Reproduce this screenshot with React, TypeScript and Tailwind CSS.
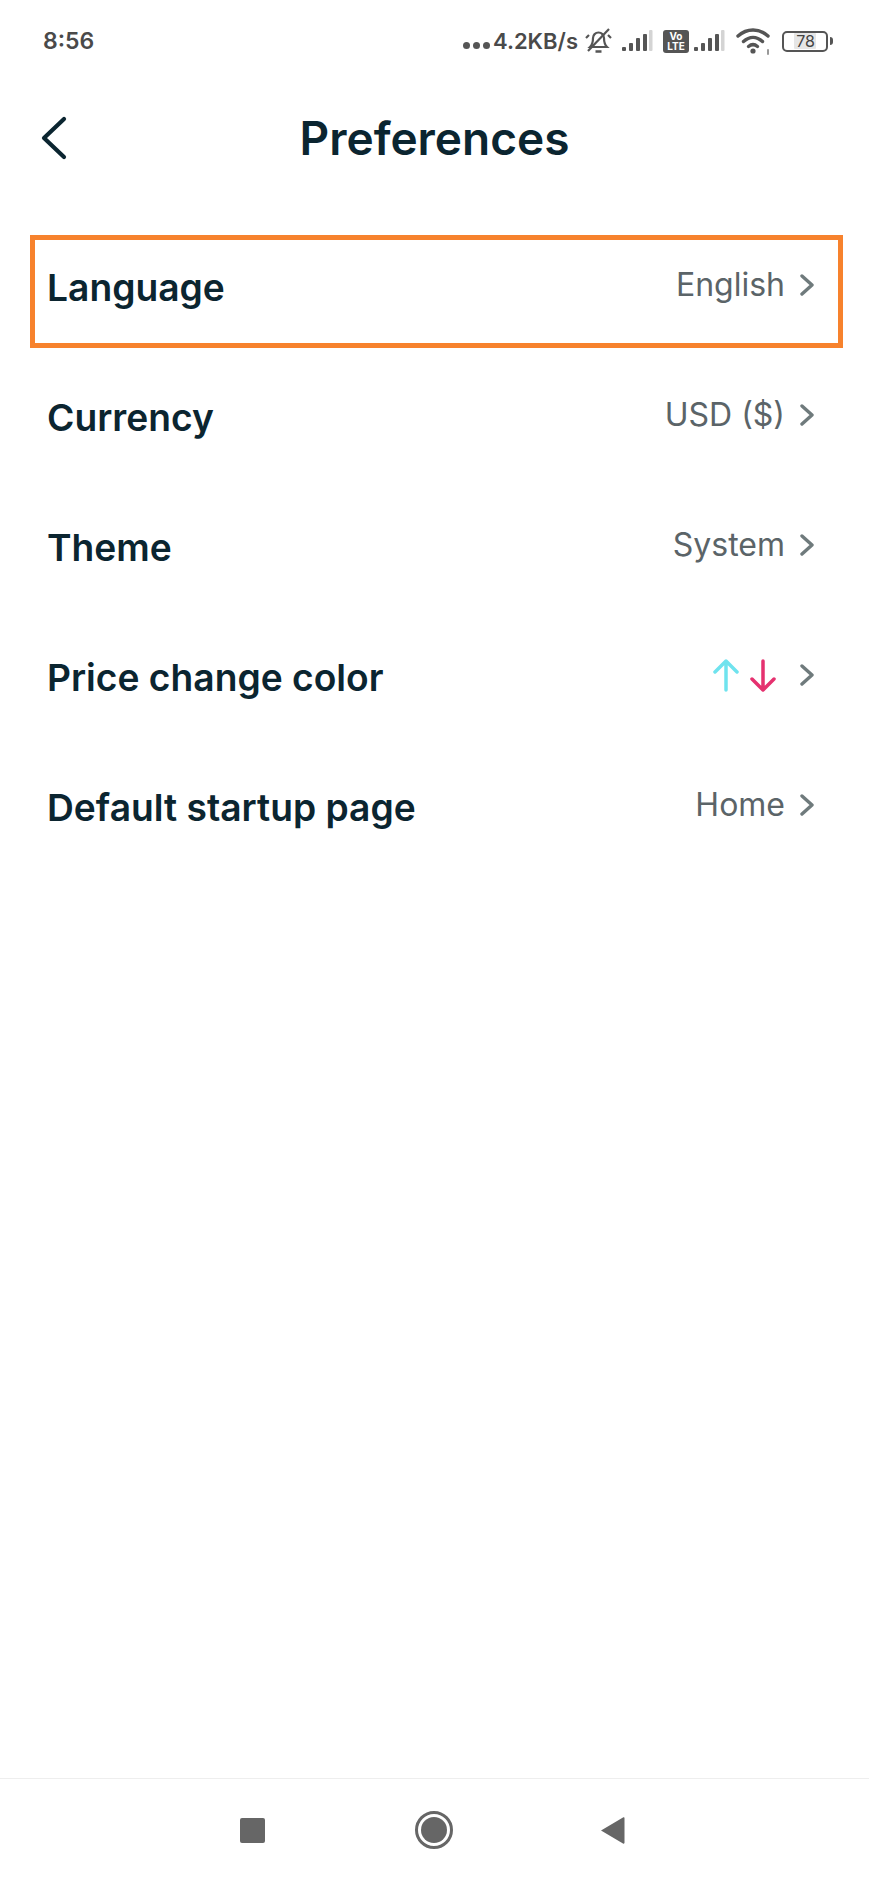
const rows = [
  { label: "Language", value: "English" },
  { label: "Currency", value: "USD ($)" },
  { label: "Theme", value: "System" },
  { label: "Price change color", value: null },
  { label: "Default startup page", value: "Home" },
];

function Signal() {
  return (
    <svg width="32" height="24" viewBox="0 0 32 24">
      <rect x="1" y="18" width="4" height="4" rx="1" fill="#555" />
      <rect x="8" y="14" width="4" height="8" rx="1" fill="#555" />
      <rect x="15" y="9" width="4" height="13" rx="1" fill="#555" />
      <rect x="22" y="5" width="4" height="17" rx="1" fill="#555" />
      <rect x="28" y="1" width="3.5" height="21" rx="1" fill="#d4d4d4" />
    </svg>
  );
}

function MutedBell() {
  return (
    <svg width="27" height="28" viewBox="0 0 27 28" fill="none" stroke="#555" strokeWidth="2.200">
      <path d="M5 20c2-2 3-4 3-9a5.500 5.500 0 0 1 11 0c0 5 1 7 3 9z" />
      <path d="M10.500 24.500h6" strokeWidth="2.500" />
      <path d="M3 24 24 2" />
      <path d="M1 11l3-3M26 11l-3-3" />
    </svg>
  );
}

function Wifi() {
  return (
    <svg width="36" height="28" viewBox="0 0 36 28" fill="none" stroke="#555" strokeWidth="3.400" strokeLinecap="round">
      <path d="M2 9c9-8 21-8 30 0" />
      <path d="M7.500 14.500c6-5.500 13-5.500 19 0" />
      <path d="M12.500 19.500c3-2.500 6-2.500 9 0" />
      <circle cx="17" cy="24" r="2.600" fill="#555" stroke="none" />
      <path d="M32 23v4" strokeWidth="2" stroke="#999" />
    </svg>
  );
}

function StatusBar() {
  return (
    <div className="flex h-[82px] items-center justify-between pl-[43px] pr-[36px] text-[#4a4a4a]">
      <span className="text-[23px] font-semibold">8:56</span>
      <div className="flex items-center">
        <div className="mr-[3px] mt-[8px] flex gap-[3px]">
          <span className="h-[7px] w-[7px] rounded-full bg-[#555]" />
          <span className="h-[7px] w-[7px] rounded-full bg-[#555]" />
          <span className="h-[7px] w-[7px] rounded-full bg-[#555]" />
        </div>
        <span className="text-[22px] font-semibold">4.2KB/s</span>
        <div className="ml-[7px]">
          <MutedBell />
        </div>
        <div className="ml-[9px]">
          <Signal />
        </div>
        <div className="ml-[10px] flex h-[23px] w-[26px] flex-col items-center justify-center rounded-[3px] bg-[#555] text-[10px] font-bold leading-[10px] text-white">
          <span>Vo</span>
          <span>LTE</span>
        </div>
        <div className="ml-[4px]">
          <Signal />
        </div>
        <div className="ml-[11px]">
          <Wifi />
        </div>
        <div className="ml-[10px] flex h-[21px] w-[46px] items-center justify-center rounded-[5px] border-2 border-[#555] text-[16px] leading-none text-[#444]">
          <span className="rounded-[1px] bg-[#e6e6e6] pl-[2px] pr-[1px]">78</span>
        </div>
        <span className="ml-[2px] h-[8px] w-[3px] rounded-r-sm bg-[#555]" />
      </div>
    </div>
  );
}

function Arrows() {
  return (
    <div className="mr-[9px] flex items-center gap-[11px]">
      <svg width="26" height="33" viewBox="0 0 26 33" fill="none" stroke="#6fe3ee" strokeWidth="3.500" strokeLinecap="round" strokeLinejoin="round">
        <path d="M13 31V2M2 13 13 2l11 11" />
      </svg>
      <svg width="26" height="33" viewBox="0 0 26 33" fill="none" stroke="#e5316f" strokeWidth="3.500" strokeLinecap="round" strokeLinejoin="round">
        <path d="M13 2v29M2 20l11 11 11-11" />
      </svg>
    </div>
  );
}

export default function App() {
  return (
    <div className="flex h-[1883px] w-[869px] flex-col bg-white font-['Inter',sans-serif]">
      <StatusBar />
      <div className="grid h-[112px] grid-cols-[1fr_auto_1fr] items-center">
        <button className="ml-[41px] justify-self-start text-[#0b2530]">
          <svg className="block" width="26" height="44" viewBox="0 0 26 44" fill="none" stroke="currentColor" strokeWidth="4.200" strokeLinecap="round" strokeLinejoin="round">
            <path d="M23 3 3 22l20 19" />
          </svg>
        </button>
        <h1 className="text-[46px] font-semibold text-[#0b2530]">Preferences</h1>
      </div>
      <div className="mt-[41px] flex flex-1 flex-col pl-[30px] pr-[26px]">
        {rows.map((row, i) => (
          <div
            key={row.label}
            className={
              i === 0
                ? "flex h-[113px] shrink-0 items-center justify-between border-[5px] border-[#f7822d] pb-[7px] pl-[12px] pr-[24px]"
                : "mt-[17px] flex h-[113px] shrink-0 items-center justify-between border-[5px] border-transparent pb-[7px] pl-[12px] pr-[24px]"
            }
          >
            <span className="text-[37.200px] font-semibold text-[#0b2530]">{row.label}</span>
            <div className="mb-[6px] flex items-center gap-[15px]">
              {row.value ? (
                <span className="text-[32px] text-[#5b6468]">{row.value}</span>
              ) : (
                <Arrows />
              )}
              <svg width="14" height="22" viewBox="0 0 14 22" fill="none" stroke="#6f7a7c" strokeWidth="3.400" strokeLinecap="round" strokeLinejoin="round">
                <path d="M2 2l10 9-10 9" />
              </svg>
            </div>
          </div>
        ))}
      </div>
      <div className="flex h-[105px] items-center justify-center border-t border-[#eeeeee] pb-[2px] pr-[5px]">
        <span className="h-[25px] w-[25px] rounded-[2px] bg-[#666666]" />
        <span className="ml-[150px] flex h-[38px] w-[38px] items-center justify-center rounded-full border-[3px] border-[#666666]">
          <span className="h-[26px] w-[26px] rounded-full bg-[#666666]" />
        </span>
        <svg className="ml-[147px]" width="25" height="29" viewBox="0 0 25 29">
          <path d="M1 14.500 23 1.500c1-.5 1.500 0 1.500 1v24c0 1-.5 1.500-1.500 1z" fill="#666666" />
        </svg>
      </div>
    </div>
  );
}
